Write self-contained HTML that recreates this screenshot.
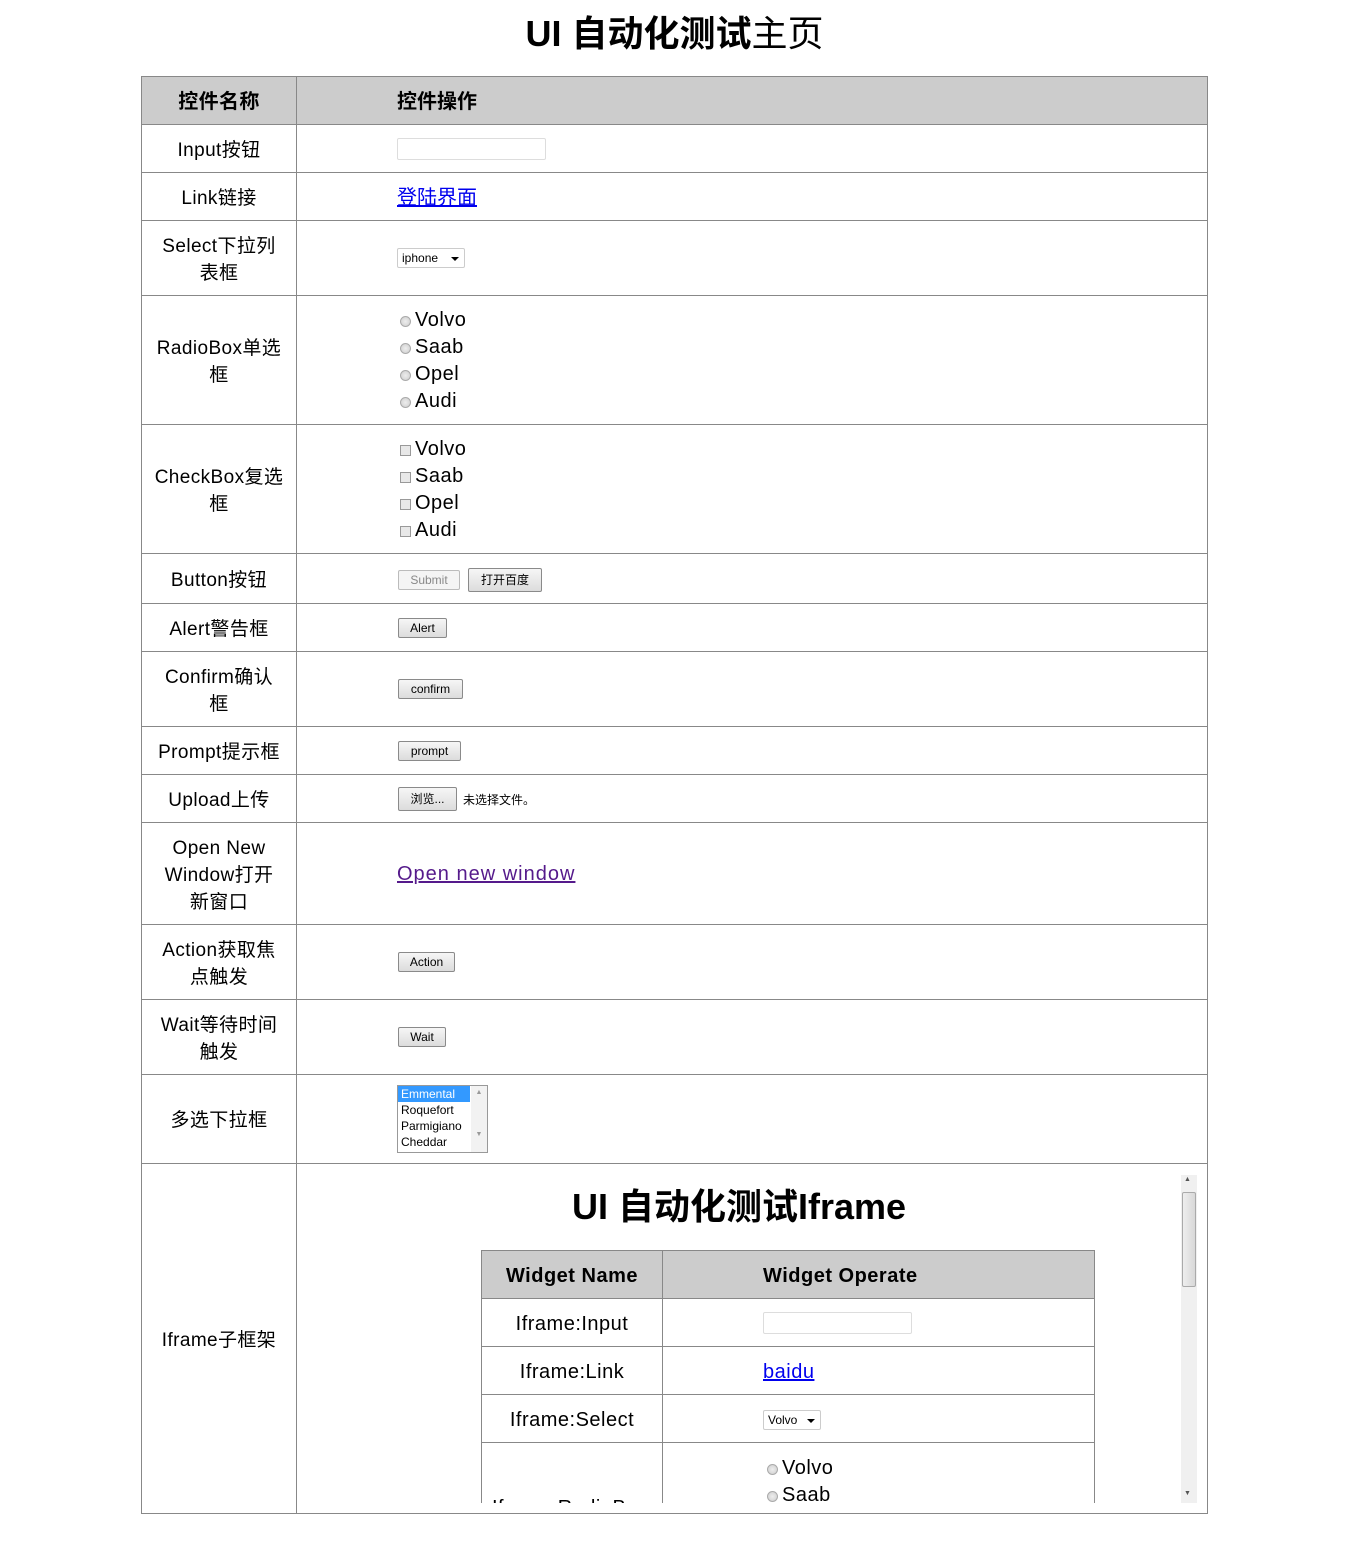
<!DOCTYPE html>
<html><head><meta charset="utf-8">
<style>
*{box-sizing:border-box;margin:0;padding:0}
body{width:1349px;height:1544px;background:#fff;position:relative;overflow:hidden;font-family:"Liberation Sans","Noto Sans CJK SC",sans-serif;color:#000}
.a{position:absolute}
.h{background:#888}
.lc{position:absolute;left:142px;width:154px;display:flex;align-items:center;justify-content:center;text-align:center;font-size:19px;line-height:27px;padding-top:3px;letter-spacing:0.4px}
.btn{position:absolute;height:20px;border:1px solid #8a8a8a;border-radius:2px;background:linear-gradient(#f6f6f6,#dcdcdc);font-size:12px;line-height:18px;text-align:center;color:#000}
.t{font-size:20px;line-height:27px;position:absolute;left:400px;letter-spacing:0.5px}
.rd{display:inline-block;width:11px;height:11px;border:1px solid #aaa;border-radius:50%;background:radial-gradient(#eee,#ccc);margin-right:4px;vertical-align:-1px}
.cb{display:inline-block;width:11px;height:11px;border:1px solid #999;background:#e8e8e8;margin-right:4px;vertical-align:-1px}
.sel{position:absolute;border:1px solid #ccc;border-radius:2px;background:#fff;font-size:12px;line-height:18px;padding-left:4px}
.sel:after{content:"";position:absolute;right:5px;top:8px;border:4px solid transparent;border-top:4px solid #000;border-bottom:0}
.ls{letter-spacing:0.5px}
</style></head><body>
<div class="a" style="left:0;top:11px;width:1349px;text-align:center;font-size:36px;font-weight:bold;line-height:46px">UI 自动化测试<span style="font-weight:normal">主页</span></div>

<div class="a" style="left:141px;top:76px;width:1067px;height:49px;background:#ccc"></div>
<div class="a h" style="left:141px;top:76px;width:1067px;height:1px"></div>
<div class="a h" style="left:141px;top:1513px;width:1067px;height:1px"></div>
<div class="a h" style="left:141px;top:76px;width:1px;height:1438px"></div>
<div class="a h" style="left:1207px;top:76px;width:1px;height:1438px"></div>
<div class="a h" style="left:296px;top:76px;width:1px;height:1438px"></div>
<div class="a h" style="left:141px;top:124px;width:1067px;height:1px"></div>
<div class="a h" style="left:141px;top:172px;width:1067px;height:1px"></div>
<div class="a h" style="left:141px;top:220px;width:1067px;height:1px"></div>
<div class="a h" style="left:141px;top:295px;width:1067px;height:1px"></div>
<div class="a h" style="left:141px;top:424px;width:1067px;height:1px"></div>
<div class="a h" style="left:141px;top:553px;width:1067px;height:1px"></div>
<div class="a h" style="left:141px;top:603px;width:1067px;height:1px"></div>
<div class="a h" style="left:141px;top:651px;width:1067px;height:1px"></div>
<div class="a h" style="left:141px;top:726px;width:1067px;height:1px"></div>
<div class="a h" style="left:141px;top:774px;width:1067px;height:1px"></div>
<div class="a h" style="left:141px;top:822px;width:1067px;height:1px"></div>
<div class="a h" style="left:141px;top:924px;width:1067px;height:1px"></div>
<div class="a h" style="left:141px;top:999px;width:1067px;height:1px"></div>
<div class="a h" style="left:141px;top:1074px;width:1067px;height:1px"></div>
<div class="a h" style="left:141px;top:1163px;width:1067px;height:1px"></div>

<div class="lc" style="top:77px;height:47px;font-weight:bold;font-size:20px">控件名称</div>
<div class="a" style="left:397px;top:89px;font-size:20px;font-weight:bold;line-height:27px">控件操作</div>

<div class="lc" style="top:125px;height:47px">Input按钮</div>
<div class="lc" style="top:173px;height:47px">Link链接</div>
<div class="lc" style="top:221px;height:74px">Select下拉列<br>表框</div>
<div class="lc" style="top:296px;height:128px">RadioBox单选<br>框</div>
<div class="lc" style="top:425px;height:128px">CheckBox复选<br>框</div>
<div class="lc" style="top:554px;height:49px">Button按钮</div>
<div class="lc" style="top:604px;height:47px">Alert警告框</div>
<div class="lc" style="top:652px;height:74px">Confirm确认<br>框</div>
<div class="lc" style="top:727px;height:47px">Prompt提示框</div>
<div class="lc" style="top:775px;height:47px">Upload上传</div>
<div class="lc" style="top:823px;height:101px">Open New<br>Window打开<br>新窗口</div>
<div class="lc" style="top:925px;height:74px">Action获取焦<br>点触发</div>
<div class="lc" style="top:1000px;height:74px">Wait等待时间<br>触发</div>
<div class="lc" style="top:1075px;height:88px">多选下拉框</div>
<div class="lc" style="top:1164px;height:349px">Iframe子框架</div>

<div class="a" style="left:397px;top:138px;width:149px;height:22px;border:1px solid #ddd;border-radius:2px"></div>
<div class="a" style="left:397px;top:185px;font-size:20px;line-height:27px;color:#00e;text-decoration:underline">登陆界面</div>
<div class="sel" style="left:397px;top:248px;width:68px;height:20px">iphone</div>

<div class="t" style="top:307px"><span class="rd"></span>Volvo</div>
<div class="t" style="top:334px"><span class="rd"></span>Saab</div>
<div class="t" style="top:361px"><span class="rd"></span>Opel</div>
<div class="t" style="top:388px"><span class="rd"></span>Audi</div>
<div class="t" style="top:436px"><span class="cb"></span>Volvo</div>
<div class="t" style="top:463px"><span class="cb"></span>Saab</div>
<div class="t" style="top:490px"><span class="cb"></span>Opel</div>
<div class="t" style="top:517px"><span class="cb"></span>Audi</div>

<div class="btn" style="left:398px;top:570px;width:62px;border-color:#bbb;background:#f4f4f4;color:#888">Submit</div>
<div class="btn" style="left:468px;top:568px;width:74px;height:24px;line-height:22px">打开百度</div>
<div class="btn" style="left:398px;top:618px;width:49px">Alert</div>
<div class="btn" style="left:398px;top:679px;width:65px">confirm</div>
<div class="btn" style="left:398px;top:741px;width:63px">prompt</div>
<div class="btn" style="left:398px;top:787px;width:59px;height:24px;line-height:22px">浏览...</div>
<div class="a" style="left:463px;top:791px;font-size:12px;line-height:18px">未选择文件。</div>
<div class="a ls" style="left:397px;top:861px;font-size:20px;line-height:27px;color:#551a8b;text-decoration:underline;letter-spacing:1px">Open new window</div>
<div class="btn" style="left:398px;top:952px;width:57px">Action</div>
<div class="btn" style="left:398px;top:1027px;width:48px">Wait</div>

<div class="a" style="left:397px;top:1085px;width:91px;height:68px;border:1px solid #999;font-size:12px;line-height:16px;background:#fff">
 <div style="background:#3399ff;color:#fff;width:72px;padding-left:3px">Emmental</div>
 <div style="padding-left:3px">Roquefort</div>
 <div style="padding-left:3px">Parmigiano</div>
 <div style="padding-left:3px">Cheddar</div>
 <div style="position:absolute;right:0;top:0;width:16px;height:66px;background:#f2f2f2;font-size:7px;color:#999;text-align:center;line-height:14px">▲<br><br><br>▼</div>
</div>

<div class="a" style="left:297px;top:1175px;width:884px;height:328px;overflow:hidden">
 <div class="a" style="left:0;top:9px;width:884px;text-align:center;font-size:36px;font-weight:bold;line-height:46px">UI 自动化测试Iframe</div>
 <div class="a" style="left:184px;top:75px;width:614px;height:49px;background:#ccc"></div>
 <div class="a h" style="left:184px;top:75px;width:614px;height:1px"></div>
 <div class="a h" style="left:184px;top:75px;width:1px;height:300px"></div>
 <div class="a h" style="left:797px;top:75px;width:1px;height:300px"></div>
 <div class="a h" style="left:365px;top:75px;width:1px;height:300px"></div>
 <div class="a h" style="left:184px;top:123px;width:614px;height:1px"></div>
 <div class="a h" style="left:184px;top:171px;width:614px;height:1px"></div>
 <div class="a h" style="left:184px;top:219px;width:614px;height:1px"></div>
 <div class="a h" style="left:184px;top:267px;width:614px;height:1px"></div>
 <div class="a ls" style="left:185px;top:88px;width:180px;text-align:center;font-size:20px;font-weight:bold;line-height:27px">Widget Name</div>
 <div class="a ls" style="left:466px;top:88px;font-size:20px;font-weight:bold;line-height:27px">Widget Operate</div>
 <div class="a ls" style="left:185px;top:136px;width:180px;text-align:center;font-size:20px;line-height:27px">Iframe:Input</div>
 <div class="a ls" style="left:185px;top:184px;width:180px;text-align:center;font-size:20px;line-height:27px">Iframe:Link</div>
 <div class="a ls" style="left:185px;top:232px;width:180px;text-align:center;font-size:20px;line-height:27px">Iframe:Select</div>
 <div class="a ls" style="left:195px;top:320px;font-size:20px;line-height:27px">Iframe:RadioBox</div>
 <div class="a" style="left:466px;top:137px;width:149px;height:22px;border:1px solid #ddd;border-radius:2px"></div>
 <div class="a ls" style="left:466px;top:184px;font-size:20px;line-height:27px;color:#00e;text-decoration:underline">baidu</div>
 <div class="sel" style="left:466px;top:235px;width:58px;height:20px">Volvo</div>
 <div class="a ls" style="left:470px;top:280px;font-size:20px;line-height:27px"><span class="rd"></span>Volvo</div>
 <div class="a ls" style="left:470px;top:307px;font-size:20px;line-height:27px"><span class="rd"></span>Saab</div>
</div>
<div class="a" style="left:1181px;top:1175px;width:16px;height:328px;background:#f0f0f0"></div>
<div class="a" style="left:1184px;top:1176px;font-size:7px;color:#555">▲</div>
<div class="a" style="left:1184px;top:1490px;font-size:7px;color:#555">▼</div>
<div class="a" style="left:1182px;top:1192px;width:14px;height:95px;border:1px solid #aaa;border-radius:2px;background:linear-gradient(90deg,#eee,#d8d8d8)"></div>
</body></html>
